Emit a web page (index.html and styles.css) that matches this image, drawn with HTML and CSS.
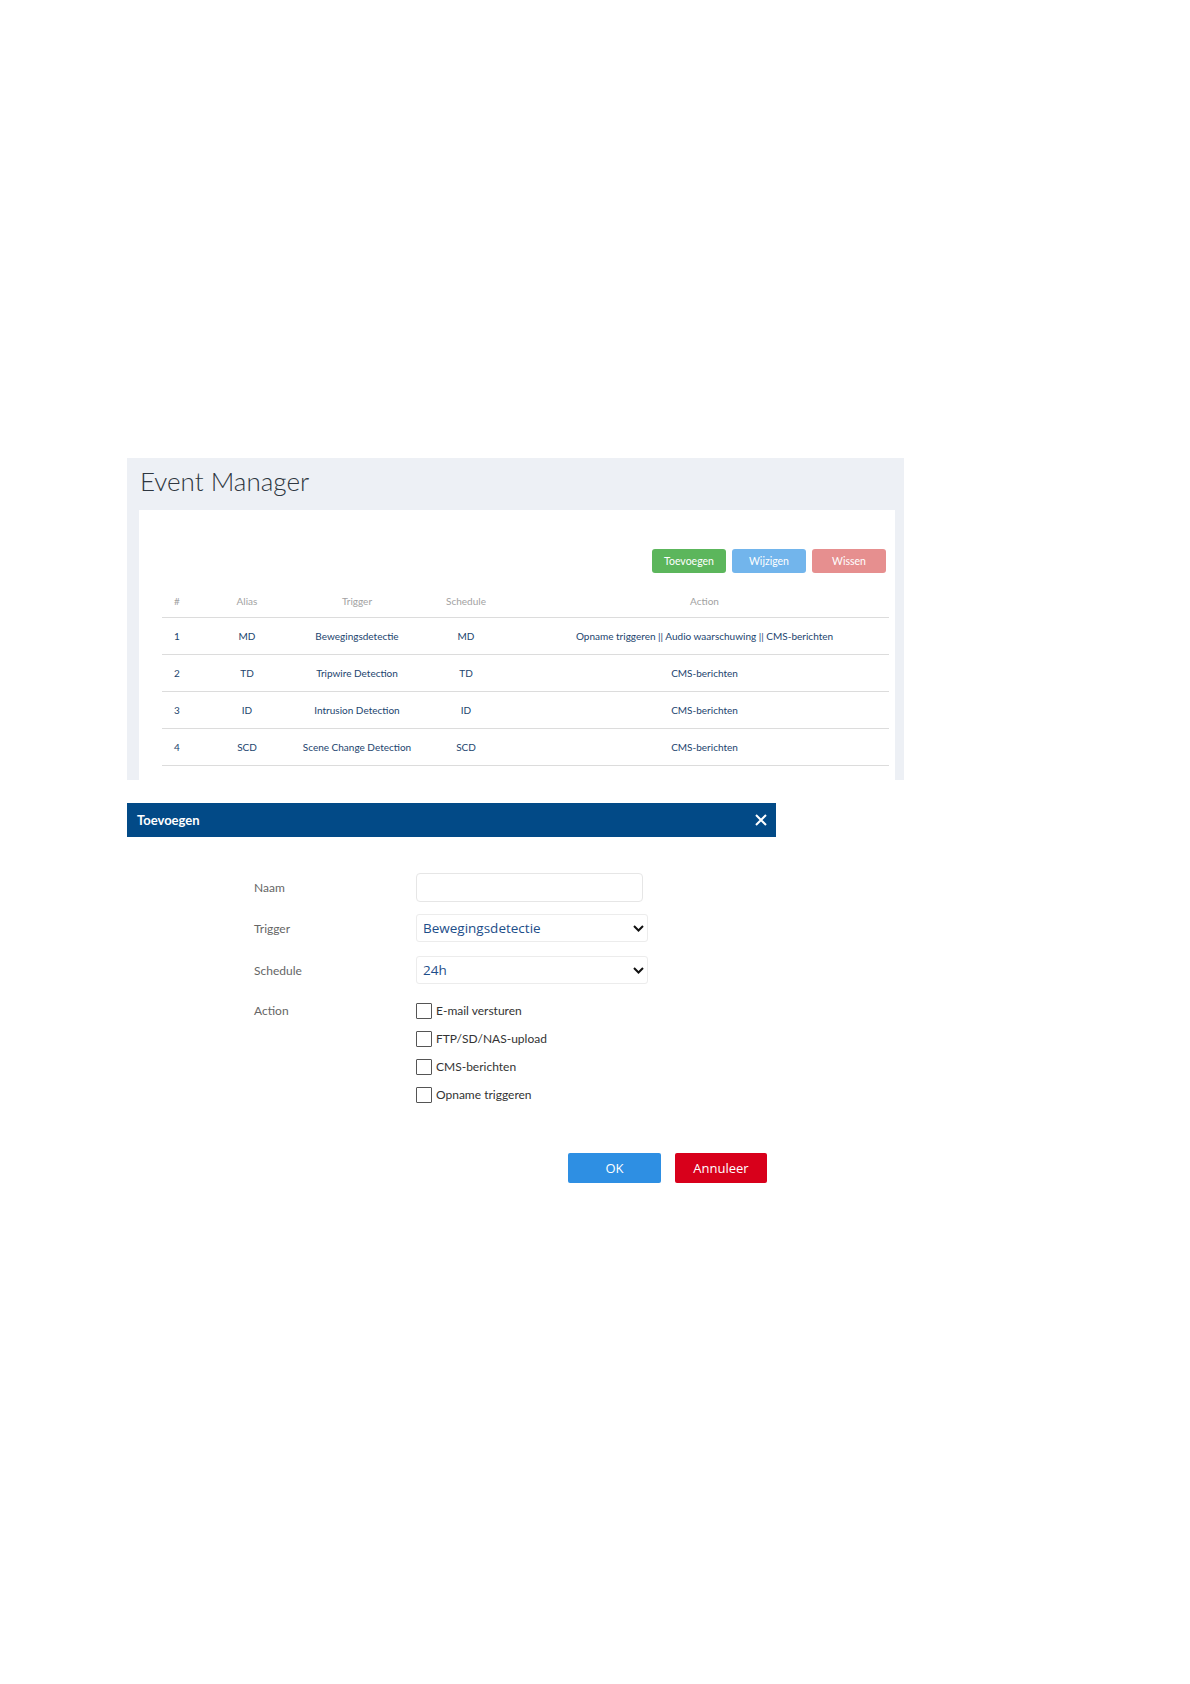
FILE: index.html
```html
<!DOCTYPE html>
<html lang="nl">
<head>
    <meta charset="UTF-8">
    <meta name="viewport" content="width=device-width, initial-scale=1.0">
    <title>Event Manager</title>
    <link rel="stylesheet" href="styles.css">
</head>
<body>
    <div class="page">
        <div class="panel">
            <h1 class="panel-title">Event Manager</h1>
            <div class="card">
                <div class="toolbar">
                    <button class="btn btn-add">Toevoegen</button>
                    <button class="btn btn-edit">Wijzigen</button>
                    <button class="btn btn-delete">Wissen</button>
                </div>
                <table class="events">
                    <thead>
                        <tr>
                            <th class="col-nr">#</th>
                            <th class="col-alias">Alias</th>
                            <th class="col-trigger">Trigger</th>
                            <th class="col-schedule">Schedule</th>
                            <th>Action</th>
                        </tr>
                    </thead>
                    <tbody>
                        <tr>
                            <td>1</td>
                            <td>MD</td>
                            <td>Bewegingsdetectie</td>
                            <td>MD</td>
                            <td>Opname triggeren || Audio waarschuwing || CMS-berichten</td>
                        </tr>
                        <tr>
                            <td>2</td>
                            <td>TD</td>
                            <td>Tripwire Detection</td>
                            <td>TD</td>
                            <td>CMS-berichten</td>
                        </tr>
                        <tr>
                            <td>3</td>
                            <td>ID</td>
                            <td>Intrusion Detection</td>
                            <td>ID</td>
                            <td>CMS-berichten</td>
                        </tr>
                        <tr>
                            <td>4</td>
                            <td>SCD</td>
                            <td>Scene Change Detection</td>
                            <td>SCD</td>
                            <td>CMS-berichten</td>
                        </tr>
                    </tbody>
                </table>
            </div>
        </div>

        <div class="dialog">
            <div class="dialog-bar">
                <span class="dialog-title">Toevoegen</span>
                <svg class="dialog-close" width="12" height="12" viewBox="0 0 12 12">
                    <path d="M1 1 L11 11 M11 1 L1 11" stroke="#fff" stroke-width="2" fill="none"/>
                </svg>
            </div>
            <div class="dialog-body">
                <div class="form-row">
                    <label class="form-label">Naam</label>
                    <input class="text-input" type="text">
                </div>
                <div class="form-row">
                    <label class="form-label">Trigger</label>
                    <div class="select">
                        <span>Bewegingsdetectie</span>
                        <svg width="11" height="7" viewBox="0 0 11 7">
                            <path d="M1 1 L5.5 5.5 L10 1" stroke="#111" stroke-width="2" fill="none"/>
                        </svg>
                    </div>
                </div>
                <div class="form-row">
                    <label class="form-label">Schedule</label>
                    <div class="select">
                        <span>24h</span>
                        <svg width="11" height="7" viewBox="0 0 11 7">
                            <path d="M1 1 L5.5 5.5 L10 1" stroke="#111" stroke-width="2" fill="none"/>
                        </svg>
                    </div>
                </div>
                <div class="form-row action-row">
                    <label class="form-label">Action</label>
                    <div class="checks">
                        <label class="check"><span class="box"></span>E-mail versturen</label>
                        <label class="check"><span class="box"></span>FTP/SD/NAS-upload</label>
                        <label class="check"><span class="box"></span>CMS-berichten</label>
                        <label class="check"><span class="box"></span>Opname triggeren</label>
                    </div>
                </div>
                <div class="dialog-buttons">
                    <button class="dbtn dbtn-ok">OK</button>
                    <button class="dbtn dbtn-cancel">Annuleer</button>
                </div>
            </div>
        </div>
    </div>
</body>
</html>
```

FILE: styles.css
```css
:root {
    --panel-bg: #edf0f5;
    --bar-color: #024a87;
    --cell-color: #22446e;
    --head-color: #a2a2a2;
    --line-color: #dcdcdc;
}

body {
    margin: 0;
    padding: 0;
    background: #fff;
    font-family: 'Lato', 'Liberation Sans', sans-serif;
    color: #333;
}

.page {
    padding: 458px 0 0 127px;
}

/* event manager panel */
.panel {
    width: 777px;
    box-sizing: border-box;
    background-color: var(--panel-bg);
    padding: 0 9px 0 12px;
}

.panel-title {
    margin: 0 0 6px;
    padding-left: 1px;
    font-size: 26px;
    font-weight: 300;
    line-height: 46px;
    color: #2e3640;
}

.card {
    background: #fff;
    padding: 39px 2px 14px 23px;
}

.toolbar {
    display: flex;
    justify-content: flex-end;
    gap: 6px;
    padding-right: 7px;
}

.btn {
    width: 74px;
    height: 24px;
    border: none;
    border-radius: 3px;
    color: #fff;
    font-family: 'Lato', sans-serif;
    font-size: 10.5px;
    padding: 0;
}

.btn-add { background-color: #5cb65c; }
.btn-edit { background-color: #72b5ec; }
.btn-delete { background-color: #e68f8f; }

.events {
    width: 727px;
    margin-top: 11px;
    border-collapse: collapse;
    table-layout: fixed;
}

.events th,
.events td {
    text-align: center;
    font-size: 10px;
    white-space: nowrap;
    border-bottom: 1px solid var(--line-color);
    padding: 0;
}

.events th {
    height: 33px;
    font-weight: 400;
    color: var(--head-color);
}

.events td {
    height: 36px;
    color: var(--cell-color);
}

.col-nr { width: 30px; }
.col-alias { width: 110px; }
.col-trigger { width: 110px; }
.col-schedule { width: 108px; }

/* add dialog */
.dialog {
    width: 649px;
    margin-top: 23px;
}

.dialog-bar {
    height: 34px;
    background-color: var(--bar-color);
    display: flex;
    align-items: center;
    justify-content: space-between;
    padding: 0 9px 0 10px;
}

.dialog-title {
    color: #fff;
    font-weight: 700;
    font-size: 13px;
}

.dialog-body {
    padding: 36px 9px 0 127px;
}

.form-row {
    display: flex;
    align-items: center;
    margin-bottom: 12px;
}

.form-row:nth-child(2) {
    margin-bottom: 14px;
}

.form-row:nth-child(3) {
    margin-bottom: 19px;
}

.form-label {
    width: 162px;
    font-size: 12px;
    color: #666;
}

.text-input {
    width: 227px;
    height: 29px;
    box-sizing: border-box;
    border: 1px solid #e6e6e6;
    border-radius: 4px;
    margin: 0;
    padding: 0 6px;
}

.select {
    width: 232px;
    height: 28px;
    box-sizing: border-box;
    border: 1px solid #ececec;
    border-radius: 3px;
    display: flex;
    align-items: center;
    justify-content: space-between;
    padding: 0 3px 0 6px;
    font-family: 'Open Sans', 'Noto Sans', sans-serif;
    font-size: 13.5px;
    color: #1d4e89;
}

.action-row {
    align-items: flex-start;
}

.action-row .form-label {
    line-height: 16px;
}

.checks {
    display: flex;
    flex-direction: column;
    gap: 12px;
}

.check {
    display: flex;
    align-items: center;
    gap: 4px;
    font-size: 12px;
    line-height: 16px;
    color: #333;
}

.box {
    width: 16px;
    height: 16px;
    box-sizing: border-box;
    border: 1px solid #555;
    border-radius: 1px;
    background: #fff;
}

.dialog-buttons {
    display: flex;
    justify-content: flex-end;
    gap: 14px;
    margin-top: 50px;
}

.dbtn {
    width: 93px;
    height: 30px;
    border: none;
    border-radius: 2px;
    color: #fff;
    font-family: 'Open Sans', 'Noto Sans', sans-serif;
    font-size: 13px;
}

.dbtn-ok { background-color: #2e8fe3; }
.dbtn-cancel { background-color: #d8001b; width: 92px; }
```
